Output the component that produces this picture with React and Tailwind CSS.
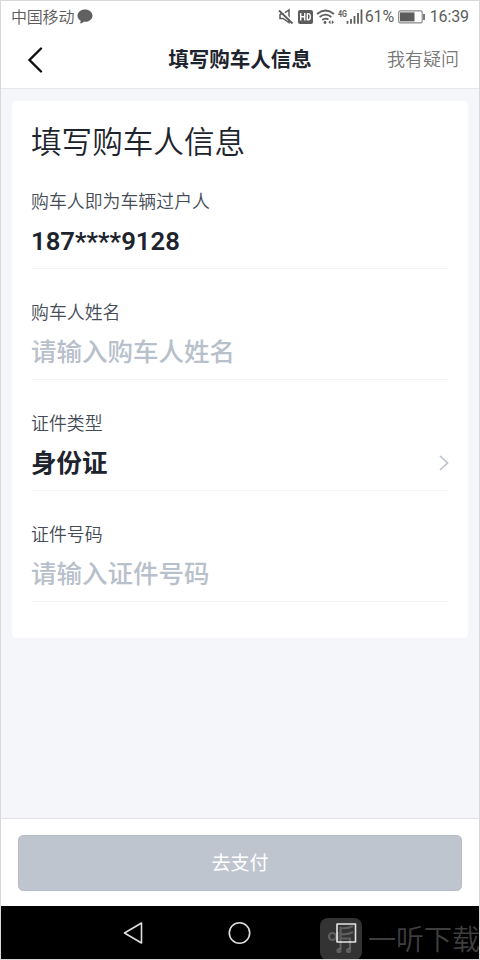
import clsx from 'clsx';

const fields = [
    { label: '购车人即为车辆过户人', value: '187****9128', type: 'number' },
    { label: '购车人姓名', placeholder: '请输入购车人姓名' },
    { label: '证件类型', value: '身份证', arrow: true },
    { label: '证件号码', placeholder: '请输入证件号码' },
];

const StatusBar = () => (
    <div className="flex h-[31px] items-center pl-[10px] pr-[10px] text-[#5c5c5c]">
        <span className="pb-[2px] text-[16px] font-[350] leading-none tracking-[-0.2px]">中国移动</span>
        <svg className="ml-[3px]" width="16" height="15" viewBox="0 0 16 15" fill="#606060">
            <path d="M8 0.5C12.2 0.5 15.5 3.2 15.5 6.7S12.2 12.8 8 12.8L6.800 12.7C5.8 13.6 4.3 14.3 2.8 14.4C3.5 13.5 3.8 12.6 3.7 11.7C1.7 10.6 0.5 8.8 0.5 6.7C0.5 3.2 3.8 0.5 8 0.5Z" />
        </svg>
        <div className="ml-auto flex items-center">
            <svg width="88" height="18" viewBox="0 0 88 18" fill="none" stroke="#5c5c5c">
                {/* muted speaker */}
                <path d="M2 6H5L11 2V14.5L5 10.5H2V6" strokeWidth="1.5" />
                <path d="M2.5 1.5L15.5 14.5" stroke="#fff" strokeWidth="1.6" />
                <path d="M1 2.5L14.5 15.5" strokeWidth="1.8" />
                {/* hd badge */}
                <rect x="20" y="2" width="15" height="14" rx="2" fill="#5c5c5c" stroke="none" />
                <path d="M22.7 5V12.5M26.7 5V12.5M22.7 8.7H26.7M29.3 5.6V11.9H30.3C33 11.9 33 5.6 30.3 5.6H29.3" stroke="#fff" strokeWidth="1.4" />
                {/* wifi */}
                <path d="M39 6Q47.5 -1 56 6M41.6 9Q47.5 4.2 53.4 9M44.2 12Q47.5 9.3 50.5 11.5" strokeWidth="1.7" />
                <circle cx="47" cy="14.500" r="1.400" fill="#5c5c5c" stroke="none" />
                <path d="M52.5 12.2L50.3 14.2L52.5 16.2ZM53.8 12.2L56 14.2L53.800 16.2Z" fill="#5c5c5c" stroke="none" />
                <text x="60" y="8.500" fill="#5c5c5c" stroke="none" fontSize="9.500" fontWeight="700" fontFamily="Roboto, sans-serif" textLength="9" lengthAdjust="spacingAndGlyphs">4G</text>
                {/* signal */}
                <path d="M69.5 13V15.8M73 11V15.8M76.5 8V15.8M80 5V15.8M83.5 1.5V15.8" strokeWidth="1.800" />
            </svg>
            <span className="ml-[-1px] w-[31px] font-[Roboto,sans-serif] text-[16px] leading-none tracking-[-0.1px]">61%</span>
            <svg className="ml-[2px]" width="28" height="14" viewBox="0 0 28 14">
                <rect x="0.7" y="0.9" width="23.5" height="12" rx="1.5" fill="none" stroke="#8a8a8a" strokeWidth="1.2" />
                <rect x="2" y="2.4" width="14.5" height="9" fill="#5c5c5c" />
                <rect x="25.2" y="4" width="1.6" height="6" fill="#5c5c5c" />
            </svg>
            <span className="ml-[4px] font-[Roboto,sans-serif] text-[16px] leading-none tracking-[-0.1px]">16:39</span>
        </div>
    </div>
);

const Header = () => (
    <header className="grid h-14 grid-cols-[1fr_auto_1fr] items-center pb-[4px]">
        <svg className="ml-[26px] mt-[4px]" width="16" height="26" viewBox="0 0 16 26" fill="none" stroke="#111" strokeWidth="2.4" strokeLinecap="round">
            <path d="M14 1.5L2.5 13L14 24.5" />
        </svg>
        <h1 className="text-[20.5px] font-bold leading-none text-[#1d242e]">填写购车人信息</h1>
        <span className="justify-self-end pr-[20px] text-[18px] font-[350] leading-none text-[#777]">我有疑问</span>
    </header>
);

const Field = ({ label, value, placeholder, type, arrow }) => (
    <div className="flex h-[111px] flex-col border-b border-[#f3f4f7] pt-[33px]">
        <div className="text-[17.9px] font-[350] leading-[18px] text-[#454c57]">{label}</div>
        <div className="mt-[12px] flex h-[36px] items-center justify-between">
            <span
                className={clsx(
                    'leading-none',
                    type === 'number' ? 'mt-[5px] font-[Roboto,sans-serif] text-[25.7px] font-semibold' : 'text-[25.5px]',
                    value ? 'font-bold text-[#1d242e]' : 'font-medium text-[#b8c0cb]'
                )}
            >
                {value || placeholder}
            </span>
            {arrow && (
                <svg className="mt-[4px]" width="10" height="16" viewBox="0 0 10 16" fill="none" stroke="#bcc1cc" strokeWidth="1.7">
                    <path d="M1 1L8.5 8L1 15" />
                </svg>
            )}
        </div>
    </div>
);

const NavBar = () => (
    <div className="relative flex h-[53px] items-center justify-center bg-black">
        <svg className="mr-px" width="237" height="26" viewBox="0 0 237 26" fill="none" stroke="#dedede" strokeWidth="1.6" strokeLinejoin="round">
            <path d="M20.5 3V23L3.5 13Z" />
            <circle cx="118.5" cy="13" r="10.2" />
            <path d="M216 4H234.5V22H216Z" />
        </svg>
        <div className="absolute left-[319px] top-[12px] flex items-center whitespace-nowrap">
            <svg width="42" height="42" viewBox="0 0 42 42" fill="none">
                <rect width="42" height="42" rx="8" fill="#fff" fillOpacity="0.2" />
                <path d="M9 18.500A3.500 3.500 0 1 0 16 18.500A3.500 3.500 0 1 0 9 18.500M17.500 14V23M20.500 24V10Q28 11 33 8M21 16Q28 17 33 14M20.500 31V20.500H30V31" stroke="#fff" strokeOpacity="0.22" strokeWidth="2.2" />
                <g fill="#fff" fillOpacity="0.22">
                    <circle cx="19" cy="32.500" r="2.600" />
                    <circle cx="28.500" cy="32.500" r="2.600" />
                </g>
            </svg>
            <span className="mt-[-3px] ml-[6px] text-[28px] font-[350] leading-none text-white/25">一听下载</span>
        </div>
    </div>
);

export default function App() {
    return (
        <div className="flex h-[960px] w-[480px] flex-col overflow-hidden border border-[#d8d8da] bg-white font-['Noto_Sans_CJK_SC',sans-serif]">
            <StatusBar />
            <Header />
            <main className="flex-1 border-t border-[#e6e7eb] bg-[#f5f6fa] px-[11px] pt-[12px]">
                <section className="h-[537px] rounded-[5px] bg-white px-[19px] pt-[23px]">
                    <h2 className="mb-[2px] text-[30.6px] font-[350] leading-[32px] text-[#1d242e]">填写购车人信息</h2>
                    <div>
                        {fields.map((field) => (
                            <Field key={field.label} {...field} />
                        ))}
                    </div>
                </section>
            </main>
            <footer className="h-[88px] border-t border-[#e1e2e8] px-[17px] pt-[16px]">
                <button className="h-[56px] w-full rounded-[5px] border border-[#b5bec6] bg-[#bec5cf] pb-[3px] text-[19px] font-normal leading-none text-white">去支付</button>
            </footer>
            <NavBar />
        </div>
    );
}
